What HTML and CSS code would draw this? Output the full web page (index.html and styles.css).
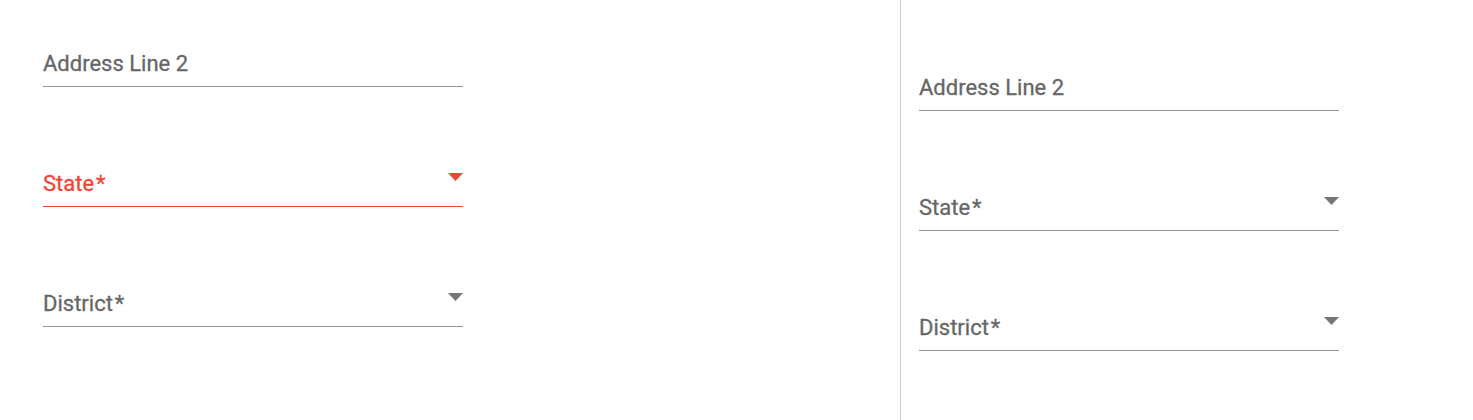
FILE: index.html
```html
<!DOCTYPE html>
<html lang="en">
<head>
<meta charset="utf-8">
<title>Address form</title>
<link rel="stylesheet" href="styles.css">
</head>
<body>
<div class="page">
  <section class="col col-left">
    <div class="field">
      <span class="label">Address Line 2</span>
    </div>
    <div class="field field-error">
      <span class="label">State<span class="req">*</span></span>
      <svg class="arrow" width="15" height="8" viewBox="0 0 15 8"><polygon points="0,0 15,0 7.5,8"/></svg>
    </div>
    <div class="field">
      <span class="label">District<span class="req">*</span></span>
      <svg class="arrow" width="15" height="8" viewBox="0 0 15 8"><polygon points="0,0 15,0 7.5,8"/></svg>
    </div>
  </section>
  <section class="col col-right">
    <div class="field">
      <span class="label">Address Line 2</span>
    </div>
    <div class="field">
      <span class="label">State<span class="req">*</span></span>
      <svg class="arrow" width="15" height="8" viewBox="0 0 15 8"><polygon points="0,0 15,0 7.5,8"/></svg>
    </div>
    <div class="field">
      <span class="label">District<span class="req">*</span></span>
      <svg class="arrow" width="15" height="8" viewBox="0 0 15 8"><polygon points="0,0 15,0 7.5,8"/></svg>
    </div>
  </section>
</div>
</body>
</html>
```

FILE: styles.css
```css
html, body {
  margin: 0;
  padding: 0;
  background: #ffffff;
}

body {
  font-family: Roboto, "Liberation Sans", Arial, sans-serif;
  height: 420px;
  overflow: hidden;
}

.page {
  display: flex;
  height: 420px;
}

.col {
  display: flex;
  flex-direction: column;
  gap: 60px;
}

.col-left {
  width: 900px;
  padding: 27px 0 0 43px;
  box-sizing: border-box;
}

.col-right {
  border-left: 1px solid #cfcfcf;
  padding: 51px 0 0 18px;
}

.field {
  width: 420px;
  height: 60px;
  box-sizing: border-box;
  padding-bottom: 10px;
  border-bottom: 1px solid #949494;
  display: flex;
  justify-content: space-between;
  align-items: flex-end;
  color: #666666;
  fill: #757575;
}

.label {
  font-size: 22px;
  line-height: 24px;
  letter-spacing: 0;
  -webkit-text-stroke: 0.3px currentColor;
}

.req {
  margin-left: 2px;
}

.arrow {
  display: block;
  margin-bottom: 15px;
}

.field-error {
  color: #f44336;
  fill: #f44336;
  border-bottom-color: #f44336;
}
```
